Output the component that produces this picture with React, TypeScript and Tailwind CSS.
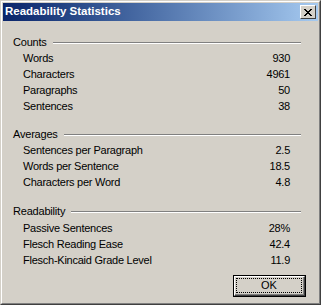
const groups = [
  {
    title: "Counts",
    rows: [
      ["Words", "930"],
      ["Characters", "4961"],
      ["Paragraphs", "50"],
      ["Sentences", "38"],
    ],
  },
  {
    title: "Averages",
    rows: [
      ["Sentences per Paragraph", "2.5"],
      ["Words per Sentence", "18.5"],
      ["Characters per Word", "4.8"],
    ],
  },
  {
    title: "Readability",
    rows: [
      ["Passive Sentences", "28%"],
      ["Flesch Reading Ease", "42.4"],
      ["Flesch-Kincaid Grade Level", "11.9"],
    ],
  },
];

export default function App() {
  return (
    <div className="h-[305px] w-[321px] border border-t-[#d4d0c8] border-l-[#d4d0c8] border-b-[#404040] border-r-[#404040] font-['Liberation_Sans',Arial,sans-serif] text-[11px] text-black">
      <div className="flex h-full flex-col border border-t-white border-l-white border-b-[#808080] border-r-[#808080] bg-[#d4d0c8] p-px">
        <TitleBar />
        <div className="flex flex-1 flex-col pl-[10px] pr-[17px] pt-[14px]">
          {groups.map((g, i) => (
            <Group key={g.title} title={g.title} rows={g.rows} index={i} />
          ))}
          <div className="-mr-[5px] mt-auto mb-[5px] flex justify-end">
            <OkButton />
          </div>
        </div>
      </div>
    </div>
  );
}

function TitleBar() {
  return (
    <div className="flex h-[18px] items-center justify-between bg-gradient-to-r from-[#0a246a] to-[#a6caf0] pl-[2px] pr-[2px]">
      <span className="text-[11.5px] font-bold text-white">Readability Statistics</span>
      <button className="flex h-[14px] w-[16px] items-center justify-center border border-t-white border-l-white border-b-[#404040] border-r-[#404040] bg-[#d4d0c8]">
        <svg width="8" height="7" viewBox="0 0 8 7" shapeRendering="crispEdges">
          <path
            d="M0 0h2v1h-2zM6 0h2v1h-2zM1 1h2v1h-2zM5 1h2v1h-2zM2 2h4v1h-4zM3 3h2v1h-2zM2 4h4v1h-4zM1 5h2v1h-2zM5 5h2v1h-2zM0 6h2v1h-2zM6 6h2v1h-2z"
            fill="#000"
          />
        </svg>
      </button>
    </div>
  );
}

function Group({
  title,
  rows,
  index,
}: {
  title: string;
  rows: string[][];
  index: number;
}) {
  return (
    <div className={index === 0 ? "" : index === 1 ? "mt-[13px]" : "mt-[14px]"}>
      <div className="flex h-[15px] items-center gap-[6px]">
        <span className="tracking-[-0.2px]">{title}</span>
        <div className="h-[2px] flex-1 border-t border-b border-t-[#808080] border-b-white" />
      </div>
      {rows.map(([label, value]) => (
        <div
          key={label}
          className={
            "flex h-[16px] items-center justify-between pl-[10px] pr-[11px] tracking-[-0.25px]" +
            (index === 2 ? " translate-y-px" : "")
          }
        >
          <span>{label}</span>
          <span>{value}</span>
        </div>
      ))}
    </div>
  );
}

function OkButton() {
  return (
    <button className="h-[22px] w-[73px] border border-black p-0">
      <div className="h-full w-full border border-t-white border-l-white border-b-[#404040] border-r-[#404040]">
        <div className="flex h-full w-full items-center justify-center border-b border-r border-b-[#808080] border-r-[#808080] p-[2px]">
          <div className="flex h-full w-full items-center justify-center outline-1 outline-dotted outline-black">
            OK
          </div>
        </div>
      </div>
    </button>
  );
}
